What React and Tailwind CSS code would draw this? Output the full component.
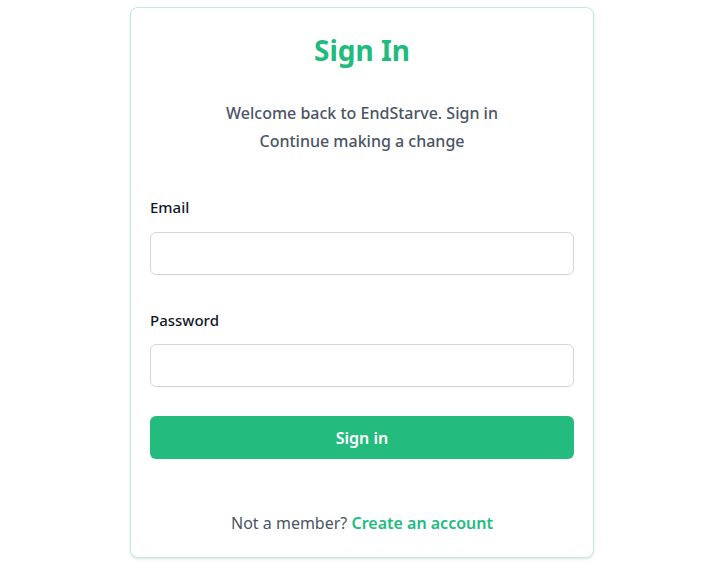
export default function App() {
  return (
    <div
      className="min-h-screen bg-white flex justify-center pl-4 pt-[7px]"
      style={{ fontFamily: '"Noto Sans", "Open Sans", sans-serif' }}
    >
      <div className="w-[464px] h-[551px] self-start bg-white border border-[#bdeedb] rounded-lg shadow-sm px-[19px] pt-6 pb-5 flex flex-col">
        {/* HEADER */}
        <h1 className="text-center text-[28px] leading-9 font-bold text-[#22bb7e]">
          Sign In
        </h1>

        <p className="mt-[31px] text-center text-[16px] leading-7 font-medium text-gray-600">
          Welcome back to EndStarve. Sign in
          <br />
          Continue making a change
        </p>

        {/* FORM */}
        <form className="mt-10 flex flex-col">
          <label className="block text-[15px] leading-6 font-medium text-gray-900">
            Email
          </label>
          <input
            type="email"
            className="mt-[13px] h-[43px] w-full rounded-md border border-gray-300 px-3 outline-none"
          />

          <label className="block mt-[33px] text-[15px] leading-6 font-medium text-gray-900">
            Password
          </label>
          <input
            type="password"
            className="mt-3 h-[43px] w-full rounded-md border border-gray-300 px-3 outline-none"
          />

          <button
            type="button"
            className="mt-[29px] h-[43px] w-full rounded-md bg-[#24bc7e] text-white text-[16px] font-semibold"
          >
            Sign in
          </button>
        </form>

        {/* FOOTER */}
        <p className="mt-auto text-center text-[16px] leading-7 text-gray-600">
          Not a member?{" "}
          <a href="#" className="font-semibold text-[#22bb7e]">
            Create an account
          </a>
        </p>
      </div>
    </div>
  );
}
